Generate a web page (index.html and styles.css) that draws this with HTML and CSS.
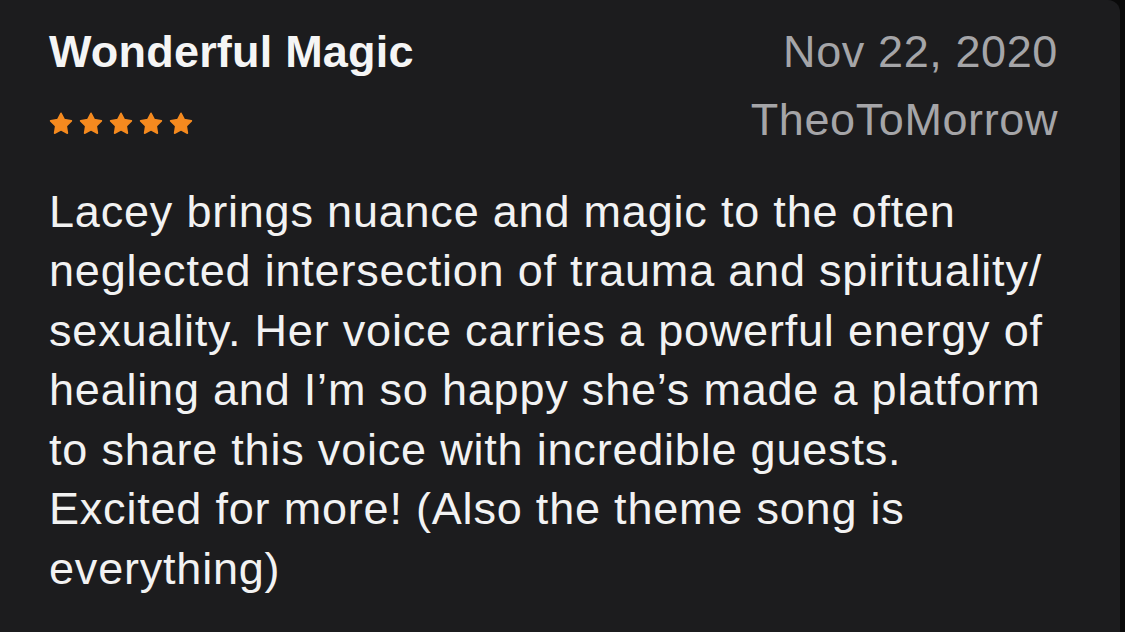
FILE: index.html
```html
<!DOCTYPE html>
<html lang="en">
<head>
<meta charset="utf-8">
<title>Review</title>
<link rel="stylesheet" href="styles.css">
</head>
<body>
<main class="card">
  <header class="head">
    <div class="left">
      <h1 class="title">Wonderful Magic</h1>
      <div class="stars" aria-label="5 stars">
        <svg class="star" width="24" height="23" viewBox="0 0 24 23"><path d="M12 1.3L15.3 7.6L22.4 8.9L17.3 14L18.4 21.2L12 17.9L5.6 21.2L6.7 14L1.6 8.9L8.7 7.6Z"/></svg>
        <svg class="star" width="24" height="23" viewBox="0 0 24 23"><path d="M12 1.3L15.3 7.6L22.4 8.9L17.3 14L18.4 21.2L12 17.9L5.6 21.2L6.7 14L1.6 8.9L8.7 7.6Z"/></svg>
        <svg class="star" width="24" height="23" viewBox="0 0 24 23"><path d="M12 1.3L15.3 7.6L22.4 8.9L17.3 14L18.4 21.2L12 17.9L5.6 21.2L6.7 14L1.6 8.9L8.7 7.6Z"/></svg>
        <svg class="star" width="24" height="23" viewBox="0 0 24 23"><path d="M12 1.3L15.3 7.6L22.4 8.9L17.3 14L18.4 21.2L12 17.9L5.6 21.2L6.7 14L1.6 8.9L8.7 7.6Z"/></svg>
        <svg class="star" width="24" height="23" viewBox="0 0 24 23"><path d="M12 1.3L15.3 7.6L22.4 8.9L17.3 14L18.4 21.2L12 17.9L5.6 21.2L6.7 14L1.6 8.9L8.7 7.6Z"/></svg>
      </div>
    </div>
    <div class="right">
      <div class="date">Nov 22, 2020</div>
      <div class="author">TheoToMorrow</div>
    </div>
  </header>
  <p class="body">Lacey brings nuance and magic to the often<br>neglected intersection of trauma and spirituality/<br>sexuality. Her voice carries a powerful energy of<br>healing and I’m so happy she’s made a platform<br>to share this voice with incredible guests.<br>Excited for more! (Also the theme song is<br>everything)</p>
</main>
</body>
</html>
```
FILE: styles.css
```css
html, body {
  margin: 0;
  padding: 0;
  height: 100%;
  overflow: hidden;
}
body {
  background: #0a0a0a;
  font-family: "Liberation Sans", Arial, sans-serif;
}
.card {
  width: 1120px;
  height: 100%;
  box-sizing: border-box;
  background: #1c1c1e;
  border-top-right-radius: 12px;
  padding: 25px 62px 0 49px;
  font-size: 45px;
  line-height: 53.5px;
}
.head {
  display: flex;
  justify-content: space-between;
  align-items: flex-start;
}
.title {
  margin: 0;
  font-size: 45px;
  font-weight: 700;
  letter-spacing: 0.2px;
  color: #f5f5f5;
  line-height: 53.5px;
}
.stars {
  display: flex;
  gap: 6px;
  margin-top: 33px;
}
.star {
  display: block;
  flex: 0 0 auto;
  width: 24px;
  height: 23px;
  fill: #f58a1f;
  stroke: #f58a1f;
  stroke-width: 1.6;
  stroke-linejoin: round;
}
.right {
  display: flex;
  flex-direction: column;
  align-items: flex-end;
  gap: 14.5px;
  color: #a5a5a8;
  letter-spacing: 0.6px;
}
.body {
  margin: 35px 0 0;
  color: #f2f2f2;
  line-height: 59.5px;
  letter-spacing: 0.8px;
}
```
